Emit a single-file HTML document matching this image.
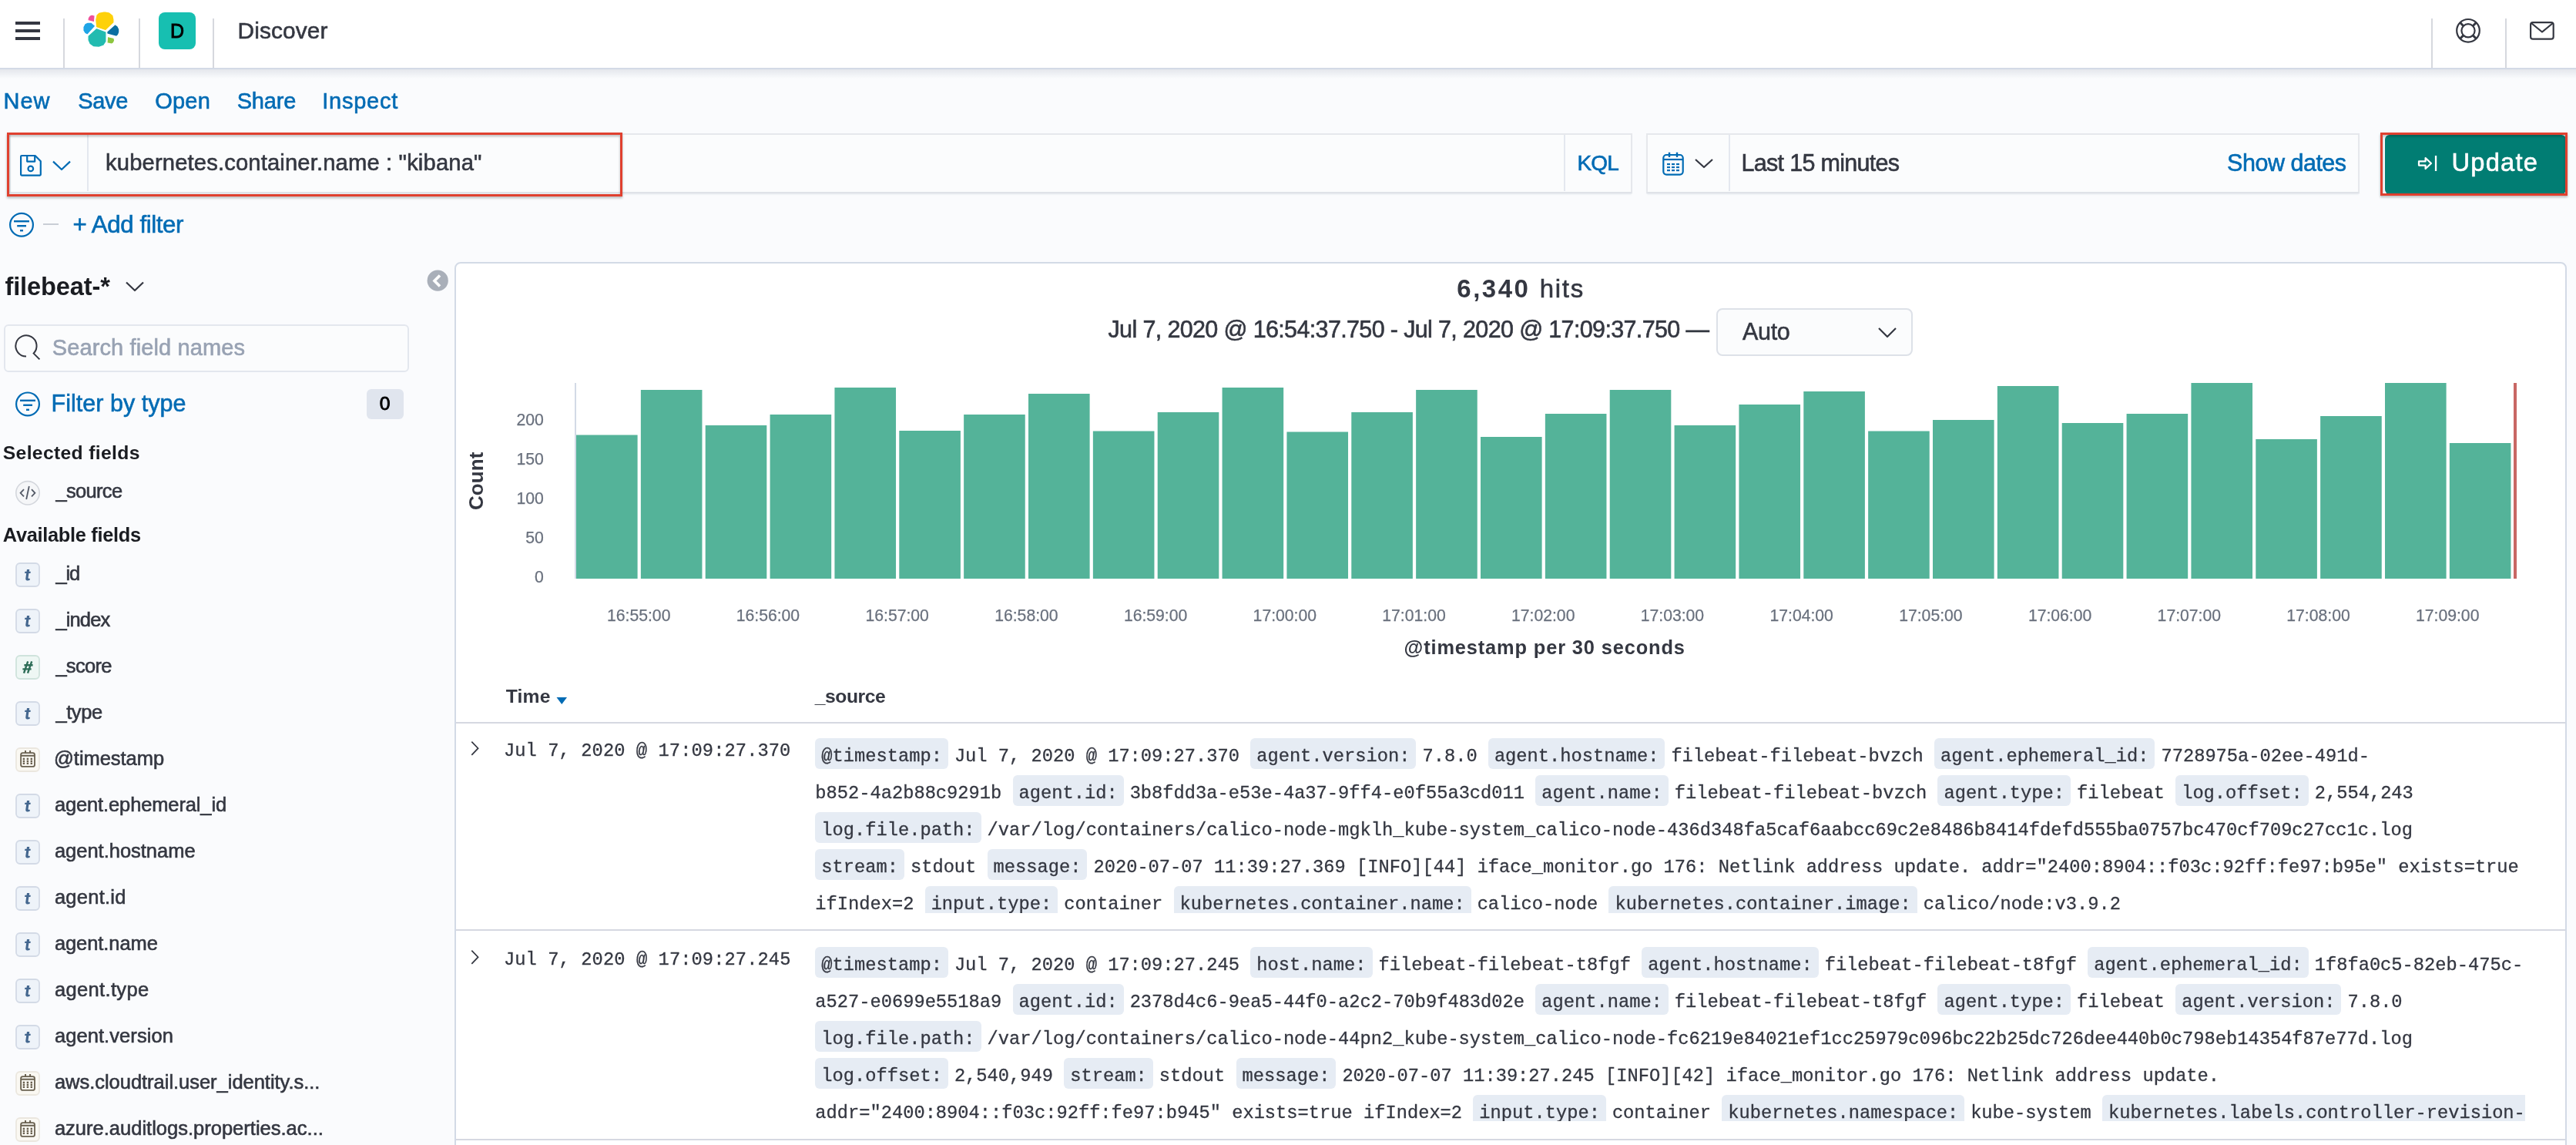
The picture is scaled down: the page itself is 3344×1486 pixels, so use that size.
<!DOCTYPE html>
<html><head><meta charset="utf-8"><title>Discover - Kibana</title>
<style>
html,body{margin:0;padding:0}
body{width:3344px;height:1486px;overflow:hidden;position:relative;background:#fafbfd;
font-family:"Liberation Sans", sans-serif;color:#343741}
.a{position:absolute;box-sizing:border-box}
svg.a{overflow:visible}
.t{position:absolute;white-space:pre}
.src{position:absolute;white-space:pre;font-family:"Liberation Mono", monospace;font-size:23.725px;color:#343741;-webkit-text-stroke:0.3px #343741}
.ln{position:absolute;left:0;height:48px;line-height:48px;white-space:pre}
.p{display:inline-block;height:40px;line-height:47.4px;vertical-align:top;margin-top:0.31px;background:#e6ecf4;border-radius:6px;padding:0 8px;margin-right:8px}
</style></head><body><div id="root" style="position:absolute;left:0;top:0;width:3344px;height:1486px;will-change:transform;">
<div class="a" style="left:0px;top:0px;width:3344px;height:88px;background:#fff;"></div><div class="a" style="left:0px;top:88px;width:3344px;height:2px;background:#d3dae6;"></div><div class="a" style="left:0px;top:90px;width:3344px;height:12px;background:linear-gradient(to bottom, rgba(152,162,179,0.22), rgba(152,162,179,0.0));"></div><div class="a" style="left:20px;top:28px;width:32px;height:4px;background:#343741;"></div><div class="a" style="left:20px;top:38px;width:32px;height:4px;background:#343741;"></div><div class="a" style="left:20px;top:48px;width:32px;height:4px;background:#343741;"></div><div class="a" style="left:82px;top:24px;width:2px;height:64px;background:#d6d8de;"></div><div class="a" style="left:180px;top:24px;width:2px;height:64px;background:#d6d8de;"></div><div class="a" style="left:276px;top:24px;width:2px;height:64px;background:#d6d8de;"></div><div class="a" style="left:3156px;top:24px;width:2px;height:64px;background:#d6d8de;"></div><div class="a" style="left:3252px;top:24px;width:2px;height:64px;background:#d6d8de;"></div><svg class="a" style="left:0px;top:0px;" width="200" height="88" viewBox="0 0 200 88"><path fill="#f0509a" stroke="#fff" stroke-width="1.3" stroke-linejoin="round" d="M113.8 26.7 L114.2 23.1 L116.3 20.1 L119.2 18.9 L123.2 20.1 L122.6 29Z"/><path fill="#fed10a" stroke="#fff" stroke-width="1.3" stroke-linejoin="round" d="M123.6 25.6 L124.9 19.3 L128.3 16 L135.8 14.7 L142.3 15.9 L146.9 19.7 L148.1 25 L148.1 29.5 L137.3 39.8 L124.5 35.6Z"/><path fill="#1fa5e6" stroke="#fff" stroke-width="1.3" stroke-linejoin="round" d="M107.8 35 L110.1 30.7 L113.9 28.9 L118.7 29 L124 33.7 L113.6 45.2 L109.9 43.2 L107.8 39.8Z"/><path fill="#22bbb0" stroke="#fff" stroke-width="1.3" stroke-linejoin="round" d="M113.9 46.4 L125.2 36.3 L138.1 41.2 L138.1 54 L134.8 59 L128.6 61.3 L121.3 61 L116.1 57.3 L113.9 52.2Z"/><path fill="#0b6fa2" stroke="#fff" stroke-width="1.3" stroke-linejoin="round" d="M138.5 41.2 L149.4 31.5 L152.9 33.9 L154.9 37.9 L154.9 41.8 L153.6 45.3 L151.2 47.5 L139 44.2Z"/><path fill="#8dc63f" stroke="#fff" stroke-width="1.3" stroke-linejoin="round" d="M139.4 47.4 L148 49.3 L148.8 52.6 L147.5 55.6 L145 57.2 L138.9 56Z"/></svg><div class="a" style="left:206px;top:16px;width:48px;height:48px;background:#17bfb1;border-radius:8px;"></div><span class="t" style="left:220.95px;top:27.83px;font-family:'Liberation Sans', sans-serif;font-weight:400;font-size:25px;line-height:25px;letter-spacing:0.000px;color:#000;-webkit-text-stroke:0.6px #000;-webkit-text-stroke:0.9px #000;">D</span><span class="t" style="left:308.56px;top:24.77px;font-family:'Liberation Sans', sans-serif;font-weight:400;font-size:29.8px;line-height:29.8px;letter-spacing:0.147px;color:#343741;-webkit-text-stroke:0.6px #343741;">Discover</span><svg class="a" style="left:0px;top:0px;" width="3344" height="88" viewBox="0 0 3344 88"><g fill="none" stroke="#343741" stroke-width="2.2">
<circle cx="3204" cy="39.8" r="14.8"/><circle cx="3204" cy="39.8" r="8.6"/>
<path d="M3193.5 29.3 L3197.9 33.7 M3214.5 29.3 L3210.1 33.7 M3193.5 50.3 L3197.9 45.9 M3214.5 50.3 L3210.1 45.9" stroke-width="3"/></g></svg><svg class="a" style="left:0px;top:0px;" width="3344" height="88" viewBox="0 0 3344 88"><g fill="none" stroke="#343741" stroke-width="2.2" stroke-linejoin="round">
<rect x="3285.1" y="29.1" width="29.6" height="21.6" rx="3"/><path d="M3286 30 L3300 41.5 L3314 30"/></g></svg><span class="t" style="left:4.62px;top:117.45px;font-family:'Liberation Sans', sans-serif;font-weight:400;font-size:29px;line-height:29px;letter-spacing:0.897px;color:#006bb4;-webkit-text-stroke:0.6px #006bb4;">New</span><span class="t" style="left:101.18px;top:117.45px;font-family:'Liberation Sans', sans-serif;font-weight:400;font-size:29px;line-height:29px;letter-spacing:-0.331px;color:#006bb4;-webkit-text-stroke:0.6px #006bb4;">Save</span><span class="t" style="left:201.13px;top:117.45px;font-family:'Liberation Sans', sans-serif;font-weight:400;font-size:29px;line-height:29px;letter-spacing:0.271px;color:#006bb4;-webkit-text-stroke:0.6px #006bb4;">Open</span><span class="t" style="left:307.68px;top:117.45px;font-family:'Liberation Sans', sans-serif;font-weight:400;font-size:29px;line-height:29px;letter-spacing:-0.195px;color:#006bb4;-webkit-text-stroke:0.6px #006bb4;">Share</span><span class="t" style="left:418.32px;top:117.45px;font-family:'Liberation Sans', sans-serif;font-weight:400;font-size:29px;line-height:29px;letter-spacing:0.732px;color:#006bb4;-webkit-text-stroke:0.6px #006bb4;">Inspect</span><div class="a" style="left:12px;top:173px;width:2107px;height:78px;background:#fbfcfd;border:2px solid #e6e8ec;border-bottom-color:#dfe2e8;box-shadow:0 2px 2px -1px rgba(152,162,179,0.25);"></div><div class="a" style="left:113px;top:175px;width:2px;height:73px;background:#e4e8ef;"></div><div class="a" style="left:2030px;top:175px;width:2px;height:73px;background:#e4e8ef;"></div><svg class="a" style="left:0px;top:0px;" width="120" height="260" viewBox="0 0 120 260"><g fill="none" stroke="#006bb4" stroke-width="2.2" stroke-linejoin="round">
<path d="M27.1 203 Q27.1 202 28.1 202 L45.6 202 L52.8 209.2 L52.8 226.6 Q52.8 227.6 51.8 227.6 L28.1 227.6 Q27.1 227.6 27.1 226.6Z"/>
<path d="M35.2 202 L35.2 209.6 L45.2 209.6 L45.2 202"/>
<circle cx="39.8" cy="218.9" r="3.3"/>
<path d="M69 209.6 L80 220 L91 209.6"/></g></svg><span class="t" style="left:137.03px;top:197.28px;font-family:'Liberation Sans', sans-serif;font-weight:400;font-size:29.2px;line-height:29.2px;letter-spacing:0.149px;color:#343741;-webkit-text-stroke:0.6px #343741;">kubernetes.container.name : &quot;kibana&quot;</span><span class="t" style="left:2047.40px;top:198.29px;font-family:'Liberation Sans', sans-serif;font-weight:400;font-size:28px;line-height:28px;letter-spacing:-0.750px;color:#006bb4;-webkit-text-stroke:0.6px #006bb4;">KQL</span><div class="a" style="left:2137px;top:173px;width:926px;height:78px;background:#fbfcfd;border:2px solid #e6e8ec;border-bottom-color:#dfe2e8;box-shadow:0 2px 2px -1px rgba(152,162,179,0.25);"></div><div class="a" style="left:2244px;top:175px;width:2px;height:73px;background:#e4e8ef;"></div><svg class="a" style="left:0px;top:0px;" width="3344" height="260" viewBox="0 0 3344 260"><g fill="none" stroke="#006bb4" stroke-width="2.2">
<rect x="2159.3" y="201" width="25.4" height="25.6" rx="4"/><path d="M2159.3 207 L2184.7 207"/>
<path d="M2167 197.8 L2167 204 M2177 197.8 L2177 204" stroke-width="2.4"/></g>
<g fill="#006bb4">
<rect x="2164" y="212" width="4" height="2.2"/><rect x="2170" y="212" width="4" height="2.2"/><rect x="2176" y="212" width="4" height="2.2"/>
<rect x="2164" y="216" width="4" height="2.2"/><rect x="2170" y="216" width="4" height="2.2"/><rect x="2176" y="216" width="4" height="2.2"/>
<rect x="2164" y="220" width="4" height="2.2"/><rect x="2170" y="220" width="4" height="2.2"/><rect x="2176" y="220" width="4" height="2.2"/>
</g>
<path d="M2201 207 L2212 217 L2223 207" fill="none" stroke="#343741" stroke-width="2.2" stroke-linejoin="round"/></svg><span class="t" style="left:2260.50px;top:196.18px;font-family:'Liberation Sans', sans-serif;font-weight:400;font-size:30.5px;line-height:30.5px;letter-spacing:-0.694px;color:#343741;-webkit-text-stroke:0.6px #343741;">Last 15 minutes</span><span class="t" style="left:2891.11px;top:196.18px;font-family:'Liberation Sans', sans-serif;font-weight:400;font-size:30.5px;line-height:30.5px;letter-spacing:-0.488px;color:#006bb4;-webkit-text-stroke:0.6px #006bb4;">Show dates</span><div class="a" style="left:3095.5px;top:175px;width:235px;height:76.5px;background:#017d73;border-radius:6px;"></div><svg class="a" style="left:0px;top:0px;" width="3344" height="260" viewBox="0 0 3344 260"><g fill="none" stroke="#fff" stroke-width="2.2" stroke-linejoin="round">
<path d="M3140 209.4 L3148.6 209.4 L3148.6 205 L3156 212 L3148.6 219 L3148.6 214.6 L3140 214.6Z"/></g>
<rect x="3160.9" y="202" width="2.3" height="20" fill="#fff"/></svg><span class="t" style="left:3182.48px;top:194.81px;font-family:'Liberation Sans', sans-serif;font-weight:400;font-size:32.7px;line-height:32.7px;letter-spacing:1.206px;color:#fff;-webkit-text-stroke:0.6px #fff;">Update</span><div class="a" style="left:9px;top:172px;width:799px;height:83px;border:3px solid #e0402f;filter:drop-shadow(0 2px 1.5px rgba(0,0,0,0.28));"></div><div class="a" style="left:3090px;top:172px;width:243px;height:82px;border:3px solid #e0402f;filter:drop-shadow(0 2px 1.5px rgba(0,0,0,0.28));"></div><svg class="a" style="left:0px;top:0px;" width="100" height="320" viewBox="0 0 100 320"><g fill="none" stroke="#006bb4" stroke-width="2.2"><circle cx="28" cy="291.8" r="14.9"/></g>
<g fill="#006bb4"><rect x="18" y="286" width="20" height="2.4"/><rect x="22.2" y="292" width="11.8" height="2.4"/><rect x="26" y="298" width="4" height="2.4"/></g>
<rect x="56" y="290" width="20" height="2" fill="#c9ced6"/></svg><span class="t" style="left:94.47px;top:276.04px;font-family:'Liberation Sans', sans-serif;font-weight:400;font-size:31.25px;line-height:31.25px;letter-spacing:-0.428px;color:#006bb4;-webkit-text-stroke:0.6px #006bb4;">+ Add filter</span><span class="t" style="left:6.44px;top:356.40px;font-family:'Liberation Sans', sans-serif;font-weight:700;font-size:32.6px;line-height:32.6px;letter-spacing:-0.121px;color:#1a1c21;">filebeat-*</span><svg class="a" style="left:0px;top:0px;" width="200" height="400" viewBox="0 0 200 400"><path d="M164 366.5 L175 377 L186 366.5" fill="none" stroke="#343741" stroke-width="2.2" stroke-linejoin="round"/></svg><svg class="a" style="left:0px;top:0px;" width="600" height="400" viewBox="0 0 600 400"><circle cx="568.2" cy="364.2" r="13.6" fill="#a9afb9"/><path d="M571 357.6 L564 364.6 L571 371.6" fill="none" stroke="#fff" stroke-width="3.6" stroke-linejoin="miter"/></svg><div class="a" style="left:5px;top:421px;width:526px;height:62px;background:#fbfcfd;border:2px solid #e3e7ee;border-radius:6px;"></div><svg class="a" style="left:0px;top:0px;" width="100" height="500" viewBox="0 0 100 500"><path d="M34 462.6 A13.6 13.6 0 1 1 43.6 458.6 L51.4 466.4" fill="none" stroke="#343741" stroke-width="2" stroke-linejoin="miter"/></svg><span class="t" style="left:67.68px;top:437.45px;font-family:'Liberation Sans', sans-serif;font-weight:400;font-size:29px;line-height:29px;letter-spacing:0.125px;color:#98a2b3;-webkit-text-stroke:0.6px #98a2b3;">Search field names</span><svg class="a" style="left:0px;top:0px;" width="100" height="560" viewBox="0 0 100 560"><g fill="none" stroke="#006bb4" stroke-width="2.2"><circle cx="36" cy="524.4" r="14.9"/></g><g fill="#006bb4"><rect x="26" y="518.6" width="20" height="2.4"/><rect x="30.2" y="524.6" width="11.8" height="2.4"/><rect x="34" y="530.6" width="4" height="2.4"/></g></svg><span class="t" style="left:66.50px;top:508.18px;font-family:'Liberation Sans', sans-serif;font-weight:400;font-size:30.5px;line-height:30.5px;letter-spacing:0.021px;color:#006bb4;-webkit-text-stroke:0.6px #006bb4;">Filter by type</span><div class="a" style="left:476px;top:504.5px;width:48px;height:39.5px;background:#e0e5ee;border-radius:6px;"></div><span class="t" style="left:492.64px;top:511.59px;font-family:'Liberation Sans', sans-serif;font-weight:400;font-size:24.7px;line-height:24.7px;letter-spacing:0.000px;color:#000;-webkit-text-stroke:0.6px #000;-webkit-text-stroke:0.9px #000;">0</span><span class="t" style="left:3.79px;top:576.09px;font-family:'Liberation Sans', sans-serif;font-weight:700;font-size:24.7px;line-height:24.7px;letter-spacing:0.339px;color:#1a1c21;">Selected fields</span><svg class="a" style="left:0px;top:0px;" width="100" height="700" viewBox="0 0 100 700"><circle cx="36" cy="639.8" r="15.2" fill="#f5f6f8" stroke="#d3d6dc" stroke-width="1.6"/><g fill="none" stroke="#535966" stroke-width="1.8"><path d="M31 635.2 L26.6 639.8 L31 644.4 M41 635.2 L45.4 639.8 L41 644.4 M37.8 631 L34.2 648"/></g></svg><span class="t" style="left:72.39px;top:625.41px;font-family:'Liberation Sans', sans-serif;font-weight:400;font-size:25.5px;line-height:25.5px;letter-spacing:-0.662px;color:#343741;-webkit-text-stroke:0.6px #343741;">_source</span><span class="t" style="left:3.87px;top:681.99px;font-family:'Liberation Sans', sans-serif;font-weight:700;font-size:25.4px;line-height:25.4px;letter-spacing:-0.317px;color:#1a1c21;">Available fields</span><span class="t" style="left:72.39px;top:731.91px;font-family:'Liberation Sans', sans-serif;font-weight:400;font-size:25.5px;line-height:25.5px;letter-spacing:-1.136px;color:#343741;-webkit-text-stroke:0.6px #343741;">_id</span><span class="t" style="left:72.39px;top:791.91px;font-family:'Liberation Sans', sans-serif;font-weight:400;font-size:25.5px;line-height:25.5px;letter-spacing:-0.851px;color:#343741;-webkit-text-stroke:0.6px #343741;">_index</span><span class="t" style="left:72.39px;top:851.91px;font-family:'Liberation Sans', sans-serif;font-weight:400;font-size:25.5px;line-height:25.5px;letter-spacing:-0.708px;color:#343741;-webkit-text-stroke:0.6px #343741;">_score</span><span class="t" style="left:72.39px;top:911.91px;font-family:'Liberation Sans', sans-serif;font-weight:400;font-size:25.5px;line-height:25.5px;letter-spacing:-0.408px;color:#343741;-webkit-text-stroke:0.6px #343741;">_type</span><span class="t" style="left:70.00px;top:971.91px;font-family:'Liberation Sans', sans-serif;font-weight:400;font-size:25.5px;line-height:25.5px;letter-spacing:-0.047px;color:#343741;-webkit-text-stroke:0.6px #343741;">@timestamp</span><span class="t" style="left:70.92px;top:1031.91px;font-family:'Liberation Sans', sans-serif;font-weight:400;font-size:25.5px;line-height:25.5px;letter-spacing:-0.129px;color:#343741;-webkit-text-stroke:0.6px #343741;">agent.ephemeral_id</span><span class="t" style="left:70.92px;top:1091.91px;font-family:'Liberation Sans', sans-serif;font-weight:400;font-size:25.5px;line-height:25.5px;letter-spacing:-0.013px;color:#343741;-webkit-text-stroke:0.6px #343741;">agent.hostname</span><span class="t" style="left:70.92px;top:1151.91px;font-family:'Liberation Sans', sans-serif;font-weight:400;font-size:25.5px;line-height:25.5px;letter-spacing:0.248px;color:#343741;-webkit-text-stroke:0.6px #343741;">agent.id</span><span class="t" style="left:70.92px;top:1211.91px;font-family:'Liberation Sans', sans-serif;font-weight:400;font-size:25.5px;line-height:25.5px;letter-spacing:-0.080px;color:#343741;-webkit-text-stroke:0.6px #343741;">agent.name</span><span class="t" style="left:70.92px;top:1271.91px;font-family:'Liberation Sans', sans-serif;font-weight:400;font-size:25.5px;line-height:25.5px;letter-spacing:0.347px;color:#343741;-webkit-text-stroke:0.6px #343741;">agent.type</span><span class="t" style="left:70.92px;top:1331.91px;font-family:'Liberation Sans', sans-serif;font-weight:400;font-size:25.5px;line-height:25.5px;letter-spacing:0.074px;color:#343741;-webkit-text-stroke:0.6px #343741;">agent.version</span><span class="t" style="left:70.92px;top:1391.91px;font-family:'Liberation Sans', sans-serif;font-weight:400;font-size:25.5px;line-height:25.5px;letter-spacing:-0.026px;color:#343741;-webkit-text-stroke:0.6px #343741;">aws.cloudtrail.user_identity.s...</span><span class="t" style="left:70.92px;top:1451.91px;font-family:'Liberation Sans', sans-serif;font-weight:400;font-size:25.5px;line-height:25.5px;letter-spacing:0.007px;color:#343741;-webkit-text-stroke:0.6px #343741;">azure.auditlogs.properties.ac...</span><svg class="a" style="left:0px;top:0px;" width="100" height="1486" viewBox="0 0 100 1486"><rect x="21" y="731" width="30" height="30" rx="5" fill="#eef3f9" stroke="#d3dae6" stroke-width="1.8"/><path fill="#44678f" transform="translate(0 0)" d="M35 739 L38.2 739 L37.8 741.8 L39.8 741.8 L39.5 744 L37.4 744 L36.6 749.6 Q36.4 750.9 37.5 750.9 L38.9 750.8 L38.5 753 Q36.9 753.5 35.4 753.4 Q32.9 753.1 33.3 750.4 L34.2 744 L32.1 744 L32.4 741.8 L34.6 741.8 Z"/><rect x="21" y="791" width="30" height="30" rx="5" fill="#eef3f9" stroke="#d3dae6" stroke-width="1.8"/><path fill="#44678f" transform="translate(0 60)" d="M35 739 L38.2 739 L37.8 741.8 L39.8 741.8 L39.5 744 L37.4 744 L36.6 749.6 Q36.4 750.9 37.5 750.9 L38.9 750.8 L38.5 753 Q36.9 753.5 35.4 753.4 Q32.9 753.1 33.3 750.4 L34.2 744 L32.1 744 L32.4 741.8 L34.6 741.8 Z"/><rect x="21" y="851" width="30" height="30" rx="5" fill="#eef7f4" stroke="#cfe3dc" stroke-width="1.8"/><g stroke="#2d6d57" stroke-width="2.4" fill="none"><path d="M36.2 858.3 L31 873.6 M41.2 858.3 L36 873.6 M31.4 863.2 L42.6 863.2 M29.4 868.4 L40.6 868.4"/></g><rect x="21" y="911" width="30" height="30" rx="5" fill="#eef3f9" stroke="#d3dae6" stroke-width="1.8"/><path fill="#44678f" transform="translate(0 180)" d="M35 739 L38.2 739 L37.8 741.8 L39.8 741.8 L39.5 744 L37.4 744 L36.6 749.6 Q36.4 750.9 37.5 750.9 L38.9 750.8 L38.5 753 Q36.9 753.5 35.4 753.4 Q32.9 753.1 33.3 750.4 L34.2 744 L32.1 744 L32.4 741.8 L34.6 741.8 Z"/><rect x="21" y="971" width="30" height="30" rx="5" fill="#faf8f2" stroke="#ebe7df" stroke-width="1.8"/><g fill="none" stroke="#6a6150" stroke-width="1.8"><rect x="27.1" y="977.1" width="17.9" height="17.8" rx="2.5"/><path d="M27.1 980.7 L45 980.7 M33 973.9 L33 977 M39.1 973.9 L39.1 977" stroke-width="2"/></g><g fill="#6a6150"><rect x="29.7" y="983.6999999999999" width="2.4" height="2.4"/><rect x="29.7" y="986.6999999999999" width="2.4" height="2.4"/><rect x="29.7" y="989.5999999999999" width="2.4" height="2.4"/><rect x="34.699999999999996" y="983.6999999999999" width="2.4" height="2.4"/><rect x="34.699999999999996" y="986.6999999999999" width="2.4" height="2.4"/><rect x="34.699999999999996" y="989.5999999999999" width="2.4" height="2.4"/><rect x="39.599999999999994" y="983.6999999999999" width="2.4" height="2.4"/><rect x="39.599999999999994" y="986.6999999999999" width="2.4" height="2.4"/><rect x="39.599999999999994" y="989.5999999999999" width="2.4" height="2.4"/></g><rect x="21" y="1031" width="30" height="30" rx="5" fill="#eef3f9" stroke="#d3dae6" stroke-width="1.8"/><path fill="#44678f" transform="translate(0 300)" d="M35 739 L38.2 739 L37.8 741.8 L39.8 741.8 L39.5 744 L37.4 744 L36.6 749.6 Q36.4 750.9 37.5 750.9 L38.9 750.8 L38.5 753 Q36.9 753.5 35.4 753.4 Q32.9 753.1 33.3 750.4 L34.2 744 L32.1 744 L32.4 741.8 L34.6 741.8 Z"/><rect x="21" y="1091" width="30" height="30" rx="5" fill="#eef3f9" stroke="#d3dae6" stroke-width="1.8"/><path fill="#44678f" transform="translate(0 360)" d="M35 739 L38.2 739 L37.8 741.8 L39.8 741.8 L39.5 744 L37.4 744 L36.6 749.6 Q36.4 750.9 37.5 750.9 L38.9 750.8 L38.5 753 Q36.9 753.5 35.4 753.4 Q32.9 753.1 33.3 750.4 L34.2 744 L32.1 744 L32.4 741.8 L34.6 741.8 Z"/><rect x="21" y="1151" width="30" height="30" rx="5" fill="#eef3f9" stroke="#d3dae6" stroke-width="1.8"/><path fill="#44678f" transform="translate(0 420)" d="M35 739 L38.2 739 L37.8 741.8 L39.8 741.8 L39.5 744 L37.4 744 L36.6 749.6 Q36.4 750.9 37.5 750.9 L38.9 750.8 L38.5 753 Q36.9 753.5 35.4 753.4 Q32.9 753.1 33.3 750.4 L34.2 744 L32.1 744 L32.4 741.8 L34.6 741.8 Z"/><rect x="21" y="1211" width="30" height="30" rx="5" fill="#eef3f9" stroke="#d3dae6" stroke-width="1.8"/><path fill="#44678f" transform="translate(0 480)" d="M35 739 L38.2 739 L37.8 741.8 L39.8 741.8 L39.5 744 L37.4 744 L36.6 749.6 Q36.4 750.9 37.5 750.9 L38.9 750.8 L38.5 753 Q36.9 753.5 35.4 753.4 Q32.9 753.1 33.3 750.4 L34.2 744 L32.1 744 L32.4 741.8 L34.6 741.8 Z"/><rect x="21" y="1271" width="30" height="30" rx="5" fill="#eef3f9" stroke="#d3dae6" stroke-width="1.8"/><path fill="#44678f" transform="translate(0 540)" d="M35 739 L38.2 739 L37.8 741.8 L39.8 741.8 L39.5 744 L37.4 744 L36.6 749.6 Q36.4 750.9 37.5 750.9 L38.9 750.8 L38.5 753 Q36.9 753.5 35.4 753.4 Q32.9 753.1 33.3 750.4 L34.2 744 L32.1 744 L32.4 741.8 L34.6 741.8 Z"/><rect x="21" y="1331" width="30" height="30" rx="5" fill="#eef3f9" stroke="#d3dae6" stroke-width="1.8"/><path fill="#44678f" transform="translate(0 600)" d="M35 739 L38.2 739 L37.8 741.8 L39.8 741.8 L39.5 744 L37.4 744 L36.6 749.6 Q36.4 750.9 37.5 750.9 L38.9 750.8 L38.5 753 Q36.9 753.5 35.4 753.4 Q32.9 753.1 33.3 750.4 L34.2 744 L32.1 744 L32.4 741.8 L34.6 741.8 Z"/><rect x="21" y="1391" width="30" height="30" rx="5" fill="#faf8f2" stroke="#ebe7df" stroke-width="1.8"/><g fill="none" stroke="#6a6150" stroke-width="1.8"><rect x="27.1" y="1397.1" width="17.9" height="17.8" rx="2.5"/><path d="M27.1 1400.7 L45 1400.7 M33 1393.9 L33 1397 M39.1 1393.9 L39.1 1397" stroke-width="2"/></g><g fill="#6a6150"><rect x="29.7" y="1403.7" width="2.4" height="2.4"/><rect x="29.7" y="1406.7" width="2.4" height="2.4"/><rect x="29.7" y="1409.6" width="2.4" height="2.4"/><rect x="34.699999999999996" y="1403.7" width="2.4" height="2.4"/><rect x="34.699999999999996" y="1406.7" width="2.4" height="2.4"/><rect x="34.699999999999996" y="1409.6" width="2.4" height="2.4"/><rect x="39.599999999999994" y="1403.7" width="2.4" height="2.4"/><rect x="39.599999999999994" y="1406.7" width="2.4" height="2.4"/><rect x="39.599999999999994" y="1409.6" width="2.4" height="2.4"/></g><rect x="21" y="1451" width="30" height="30" rx="5" fill="#faf8f2" stroke="#ebe7df" stroke-width="1.8"/><g fill="none" stroke="#6a6150" stroke-width="1.8"><rect x="27.1" y="1457.1" width="17.9" height="17.8" rx="2.5"/><path d="M27.1 1460.7 L45 1460.7 M33 1453.9 L33 1457 M39.1 1453.9 L39.1 1457" stroke-width="2"/></g><g fill="#6a6150"><rect x="29.7" y="1463.7" width="2.4" height="2.4"/><rect x="29.7" y="1466.7" width="2.4" height="2.4"/><rect x="29.7" y="1469.6" width="2.4" height="2.4"/><rect x="34.699999999999996" y="1463.7" width="2.4" height="2.4"/><rect x="34.699999999999996" y="1466.7" width="2.4" height="2.4"/><rect x="34.699999999999996" y="1469.6" width="2.4" height="2.4"/><rect x="39.599999999999994" y="1463.7" width="2.4" height="2.4"/><rect x="39.599999999999994" y="1466.7" width="2.4" height="2.4"/><rect x="39.599999999999994" y="1469.6" width="2.4" height="2.4"/></g></svg><div class="a" style="left:590px;top:340px;width:2742px;height:1200px;background:#fff;border:2px solid #d3dae6;border-radius:8px;"></div><span class="t" style="left:1891.29px;top:358.06px;font-family:'Liberation Sans', sans-serif;font-weight:700;font-size:33px;line-height:33px;letter-spacing:2.495px;color:#343741;">6,340</span><span class="t" style="left:1998.71px;top:358.06px;font-family:'Liberation Sans', sans-serif;font-weight:400;font-size:33px;line-height:33px;letter-spacing:1.709px;color:#343741;-webkit-text-stroke:0.6px #343741;">hits</span><span class="t" style="left:1438.52px;top:411.68px;font-family:'Liberation Sans', sans-serif;font-weight:400;font-size:30.5px;line-height:30.5px;letter-spacing:-0.644px;color:#343741;-webkit-text-stroke:0.6px #343741;">Jul 7, 2020 @ 16:54:37.750 - Jul 7, 2020 @ 17:09:37.750 —</span><div class="a" style="left:2227.5px;top:399.5px;width:255.5px;height:62.5px;background:#fbfcfd;border:2px solid #dde1e8;border-radius:8px;"></div><span class="t" style="left:2261.94px;top:415.18px;font-family:'Liberation Sans', sans-serif;font-weight:400;font-size:30.5px;line-height:30.5px;letter-spacing:-0.301px;color:#343741;-webkit-text-stroke:0.6px #343741;">Auto</span><svg class="a" style="left:0px;top:0px;" width="3344" height="500" viewBox="0 0 3344 500"><path d="M2439 426 L2450 437 L2461 426" fill="none" stroke="#343741" stroke-width="2.2" stroke-linejoin="round"/></svg><svg class="a" style="left:0px;top:0px;" width="3344" height="800" viewBox="0 0 3344 800"><rect x="748.00" y="564.5" width="79.6" height="186.5" fill="#54b399"/><rect x="831.86" y="506" width="79.6" height="245.0" fill="#54b399"/><rect x="915.71" y="552" width="79.6" height="199.0" fill="#54b399"/><rect x="999.57" y="538" width="79.6" height="213.0" fill="#54b399"/><rect x="1083.43" y="503" width="79.6" height="248.0" fill="#54b399"/><rect x="1167.29" y="559" width="79.6" height="192.0" fill="#54b399"/><rect x="1251.14" y="538" width="79.6" height="213.0" fill="#54b399"/><rect x="1335.00" y="511" width="79.6" height="240.0" fill="#54b399"/><rect x="1418.86" y="559.5" width="79.6" height="191.5" fill="#54b399"/><rect x="1502.71" y="535" width="79.6" height="216.0" fill="#54b399"/><rect x="1586.57" y="503" width="79.6" height="248.0" fill="#54b399"/><rect x="1670.43" y="560.5" width="79.6" height="190.5" fill="#54b399"/><rect x="1754.29" y="535" width="79.6" height="216.0" fill="#54b399"/><rect x="1838.14" y="506" width="79.6" height="245.0" fill="#54b399"/><rect x="1922.00" y="567" width="79.6" height="184.0" fill="#54b399"/><rect x="2005.86" y="537" width="79.6" height="214.0" fill="#54b399"/><rect x="2089.71" y="506" width="79.6" height="245.0" fill="#54b399"/><rect x="2173.57" y="552" width="79.6" height="199.0" fill="#54b399"/><rect x="2257.43" y="525" width="79.6" height="226.0" fill="#54b399"/><rect x="2341.29" y="508" width="79.6" height="243.0" fill="#54b399"/><rect x="2425.14" y="559.5" width="79.6" height="191.5" fill="#54b399"/><rect x="2509.00" y="545" width="79.6" height="206.0" fill="#54b399"/><rect x="2592.86" y="501" width="79.6" height="250.0" fill="#54b399"/><rect x="2676.71" y="549" width="79.6" height="202.0" fill="#54b399"/><rect x="2760.57" y="537" width="79.6" height="214.0" fill="#54b399"/><rect x="2844.43" y="497" width="79.6" height="254.0" fill="#54b399"/><rect x="2928.29" y="570" width="79.6" height="181.0" fill="#54b399"/><rect x="3012.14" y="540" width="79.6" height="211.0" fill="#54b399"/><rect x="3096.00" y="497" width="79.6" height="254.0" fill="#54b399"/><rect x="3179.86" y="575" width="79.6" height="176.0" fill="#54b399"/><rect x="746" y="497" width="2" height="254" fill="#d3dae6"/><rect x="3263" y="497" width="4" height="254" fill="#c86764"/></svg><span class="t" style="left:670.46px;top:534.05px;font-family:'Liberation Sans', sans-serif;font-weight:400;font-size:21.2px;line-height:21.2px;letter-spacing:0.000px;color:#69707d;-webkit-text-stroke:0.25px #69707d;">200</span><span class="t" style="left:670.46px;top:585.05px;font-family:'Liberation Sans', sans-serif;font-weight:400;font-size:21.2px;line-height:21.2px;letter-spacing:0.000px;color:#69707d;-webkit-text-stroke:0.25px #69707d;">150</span><span class="t" style="left:670.46px;top:636.05px;font-family:'Liberation Sans', sans-serif;font-weight:400;font-size:21.2px;line-height:21.2px;letter-spacing:0.000px;color:#69707d;-webkit-text-stroke:0.25px #69707d;">100</span><span class="t" style="left:682.25px;top:687.05px;font-family:'Liberation Sans', sans-serif;font-weight:400;font-size:21.2px;line-height:21.2px;letter-spacing:0.000px;color:#69707d;-webkit-text-stroke:0.25px #69707d;">50</span><span class="t" style="left:694.04px;top:738.05px;font-family:'Liberation Sans', sans-serif;font-weight:400;font-size:21.2px;line-height:21.2px;letter-spacing:0.000px;color:#69707d;-webkit-text-stroke:0.25px #69707d;">0</span><span class="t" style="left:788.04px;top:788.05px;font-family:'Liberation Sans', sans-serif;font-weight:400;font-size:21.2px;line-height:21.2px;letter-spacing:-0.011px;color:#69707d;-webkit-text-stroke:0.25px #69707d;">16:55:00</span><span class="t" style="left:955.76px;top:788.05px;font-family:'Liberation Sans', sans-serif;font-weight:400;font-size:21.2px;line-height:21.2px;letter-spacing:-0.011px;color:#69707d;-webkit-text-stroke:0.25px #69707d;">16:56:00</span><span class="t" style="left:1123.47px;top:788.05px;font-family:'Liberation Sans', sans-serif;font-weight:400;font-size:21.2px;line-height:21.2px;letter-spacing:-0.011px;color:#69707d;-webkit-text-stroke:0.25px #69707d;">16:57:00</span><span class="t" style="left:1291.19px;top:788.05px;font-family:'Liberation Sans', sans-serif;font-weight:400;font-size:21.2px;line-height:21.2px;letter-spacing:-0.011px;color:#69707d;-webkit-text-stroke:0.25px #69707d;">16:58:00</span><span class="t" style="left:1458.90px;top:788.05px;font-family:'Liberation Sans', sans-serif;font-weight:400;font-size:21.2px;line-height:21.2px;letter-spacing:-0.011px;color:#69707d;-webkit-text-stroke:0.25px #69707d;">16:59:00</span><span class="t" style="left:1626.61px;top:788.05px;font-family:'Liberation Sans', sans-serif;font-weight:400;font-size:21.2px;line-height:21.2px;letter-spacing:-0.011px;color:#69707d;-webkit-text-stroke:0.25px #69707d;">17:00:00</span><span class="t" style="left:1794.33px;top:788.05px;font-family:'Liberation Sans', sans-serif;font-weight:400;font-size:21.2px;line-height:21.2px;letter-spacing:-0.011px;color:#69707d;-webkit-text-stroke:0.25px #69707d;">17:01:00</span><span class="t" style="left:1962.04px;top:788.05px;font-family:'Liberation Sans', sans-serif;font-weight:400;font-size:21.2px;line-height:21.2px;letter-spacing:-0.011px;color:#69707d;-webkit-text-stroke:0.25px #69707d;">17:02:00</span><span class="t" style="left:2129.76px;top:788.05px;font-family:'Liberation Sans', sans-serif;font-weight:400;font-size:21.2px;line-height:21.2px;letter-spacing:-0.011px;color:#69707d;-webkit-text-stroke:0.25px #69707d;">17:03:00</span><span class="t" style="left:2297.47px;top:788.05px;font-family:'Liberation Sans', sans-serif;font-weight:400;font-size:21.2px;line-height:21.2px;letter-spacing:-0.011px;color:#69707d;-webkit-text-stroke:0.25px #69707d;">17:04:00</span><span class="t" style="left:2465.19px;top:788.05px;font-family:'Liberation Sans', sans-serif;font-weight:400;font-size:21.2px;line-height:21.2px;letter-spacing:-0.011px;color:#69707d;-webkit-text-stroke:0.25px #69707d;">17:05:00</span><span class="t" style="left:2632.90px;top:788.05px;font-family:'Liberation Sans', sans-serif;font-weight:400;font-size:21.2px;line-height:21.2px;letter-spacing:-0.011px;color:#69707d;-webkit-text-stroke:0.25px #69707d;">17:06:00</span><span class="t" style="left:2800.61px;top:788.05px;font-family:'Liberation Sans', sans-serif;font-weight:400;font-size:21.2px;line-height:21.2px;letter-spacing:-0.011px;color:#69707d;-webkit-text-stroke:0.25px #69707d;">17:07:00</span><span class="t" style="left:2968.33px;top:788.05px;font-family:'Liberation Sans', sans-serif;font-weight:400;font-size:21.2px;line-height:21.2px;letter-spacing:-0.011px;color:#69707d;-webkit-text-stroke:0.25px #69707d;">17:08:00</span><span class="t" style="left:3136.04px;top:788.05px;font-family:'Liberation Sans', sans-serif;font-weight:400;font-size:21.2px;line-height:21.2px;letter-spacing:-0.011px;color:#69707d;-webkit-text-stroke:0.25px #69707d;">17:09:00</span><span class="t" style="left:1822.55px;top:828.49px;font-family:'Liberation Sans', sans-serif;font-weight:700;font-size:25.4px;line-height:25.4px;letter-spacing:0.862px;color:#343741;">@timestamp per 30 seconds</span><span class="t" style="left:605.37px;top:662.07px;transform-origin:0 0;transform:rotate(-90deg);font-family:'Liberation Sans', sans-serif;font-weight:700;font-size:26px;line-height:26px;letter-spacing:0.076px;color:#343741;">Count</span><span class="t" style="left:656.72px;top:892.09px;font-family:'Liberation Sans', sans-serif;font-weight:700;font-size:24.7px;line-height:24.7px;letter-spacing:0.157px;color:#343741;">Time</span><svg class="a" style="left:0px;top:0px;" width="3344" height="1000" viewBox="0 0 3344 1000"><path d="M722.5 905 L736 905 L729.25 914Z" fill="#006bb4"/></svg><span class="t" style="left:1057.74px;top:892.09px;font-family:'Liberation Sans', sans-serif;font-weight:700;font-size:24.7px;line-height:24.7px;letter-spacing:-0.439px;color:#343741;">_source</span><div class="a" style="left:592px;top:937px;width:2738px;height:2px;background:#d5d8e1;"></div><div class="a" style="left:592px;top:1206px;width:2738px;height:2px;background:#d5d8e1;"></div><div class="a" style="left:592px;top:1478px;width:2738px;height:2px;background:#d5d8e1;"></div><svg class="a" style="left:0px;top:0px;" width="3344" height="1486" viewBox="0 0 3344 1486"><path d="M612.3 962.6 L620.6 971.2 L612.3 979.8 M612.3 1233.6 L620.6 1242.2 L612.3 1250.8" fill="none" stroke="#343741" stroke-width="1.7"/></svg><span class="t" style="left:653.96px;top:962.82px;font-family:'Liberation Mono', monospace;font-weight:400;font-size:23.725px;line-height:23.725px;letter-spacing:0.093px;color:#343741;-webkit-text-stroke:0.3px #343741;">Jul 7, 2020 @ 17:09:27.370</span><span class="t" style="left:653.96px;top:1234.42px;font-family:'Liberation Mono', monospace;font-weight:400;font-size:23.725px;line-height:23.725px;letter-spacing:0.095px;color:#343741;-webkit-text-stroke:0.3px #343741;">Jul 7, 2020 @ 17:09:27.245</span><div class="src" style="left:1058.3px;top:957.69px;width:2272px;height:227.81px;overflow:hidden;"><div class="ln" style="top:0px;"><span class="p">@timestamp:</span>Jul 7, 2020 @ 17:09:27.370 <span class="p">agent.version:</span>7.8.0 <span class="p">agent.hostname:</span>filebeat-filebeat-bvzch <span class="p">agent.ephemeral_id:</span>7728975a-02ee-491d-</div><div class="ln" style="top:48px;">b852-4a2b88c9291b <span class="p">agent.id:</span>3b8fdd3a-e53e-4a37-9ff4-e0f55a3cd011 <span class="p">agent.name:</span>filebeat-filebeat-bvzch <span class="p">agent.type:</span>filebeat <span class="p">log.offset:</span>2,554,243</div><div class="ln" style="top:96px;"><span class="p">log.file.path:</span>/var/log/containers/calico-node-mgklh_kube-system_calico-node-436d348fa5caf6aabcc69c2e8486b8414fdefd555ba0757bc470cf709c27cc1c.log</div><div class="ln" style="top:144px;"><span class="p">stream:</span>stdout <span class="p">message:</span>2020-07-07 11:39:27.369 [INFO][44] iface_monitor.go 176: Netlink address update. addr=&quot;2400:8904::f03c:92ff:fe97:b95e&quot; exists=true</div><div class="ln" style="top:192px;">ifIndex=2 <span class="p">input.type:</span>container <span class="p">kubernetes.container.name:</span>calico-node <span class="p">kubernetes.container.image:</span>calico/node:v3.9.2</div></div><div class="src" style="left:1058.3px;top:1228.69px;width:2272px;height:226.81px;overflow:hidden;"><div class="ln" style="top:0px;"><span class="p">@timestamp:</span>Jul 7, 2020 @ 17:09:27.245 <span class="p">host.name:</span>filebeat-filebeat-t8fgf <span class="p">agent.hostname:</span>filebeat-filebeat-t8fgf <span class="p">agent.ephemeral_id:</span>1f8fa0c5-82eb-475c-</div><div class="ln" style="top:48px;">a527-e0699e5518a9 <span class="p">agent.id:</span>2378d4c6-9ea5-44f0-a2c2-70b9f483d02e <span class="p">agent.name:</span>filebeat-filebeat-t8fgf <span class="p">agent.type:</span>filebeat <span class="p">agent.version:</span>7.8.0</div><div class="ln" style="top:96px;"><span class="p">log.file.path:</span>/var/log/containers/calico-node-44pn2_kube-system_calico-node-fc6219e84021ef1cc25979c096bc22b25dc726dee440b0c798eb14354f87e77d.log</div><div class="ln" style="top:144px;"><span class="p">log.offset:</span>2,540,949 <span class="p">stream:</span>stdout <span class="p">message:</span>2020-07-07 11:39:27.245 [INFO][42] iface_monitor.go 176: Netlink address update.</div><div class="ln" style="top:192px;">addr=&quot;2400:8904::f03c:92ff:fe97:b945&quot; exists=true ifIndex=2 <span class="p">input.type:</span>container <span class="p">kubernetes.namespace:</span>kube-system <span class="p" style="padding-right:0;border-radius:6px 0 0 0">kubernetes.labels.controller-revision-</span></div></div></div></body></html>
